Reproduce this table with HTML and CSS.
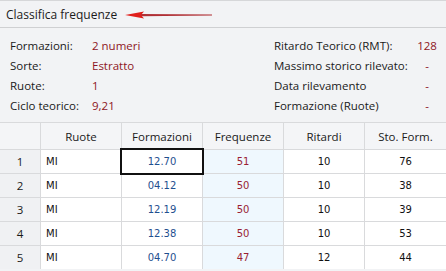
FILE: index.html
```html
<!DOCTYPE html>
<html>
<head>
<meta charset="utf-8">
<link rel="stylesheet" href="styles.css">
</head>
<body>
<div class="titlebar">
  <span class="title">Classifica frequenze</span>
  <svg class="arrow" width="88" height="12" viewBox="0 0 88 12">
    <polygon points="16,5 87,5.6 87,6.4 16,7.2" fill="#b03035"/>
    <polygon points="0,6 19,2.5 16,6 19,9.5" fill="#e0201c"/>
  </svg>
</div>
<div class="info">
  <div class="col left">
    <div class="row"><span class="lbl">Formazioni:</span><span class="val">2 numeri</span></div>
    <div class="row"><span class="lbl">Sorte:</span><span class="val">Estratto</span></div>
    <div class="row"><span class="lbl">Ruote:</span><span class="val">1</span></div>
    <div class="row"><span class="lbl">Ciclo teorico:</span><span class="val">9,21</span></div>
  </div>
  <div class="col right">
    <div class="row"><span class="lbl">Ritardo Teorico (RMT):</span><span class="val">128</span></div>
    <div class="row"><span class="lbl">Massimo storico rilevato:</span><span class="val">-</span></div>
    <div class="row"><span class="lbl">Data rilevamento</span><span class="val">-</span></div>
    <div class="row"><span class="lbl">Formazione (Ruote)</span><span class="val">-</span></div>
  </div>
</div>
<div class="grid">
  <div class="hd corner"></div>
  <div class="hd">Ruote</div>
  <div class="hd">Formazioni</div>
  <div class="hd">Frequenze</div>
  <div class="hd">Ritardi</div>
  <div class="hd">Sto. Form.</div>

  <div class="rh">1</div><div class="c ruota">MI</div><div class="c form focus">12.70</div><div class="c freq">51</div><div class="c num">10</div><div class="c num">76</div>
  <div class="rh">2</div><div class="c ruota">MI</div><div class="c form">04.12</div><div class="c freq">50</div><div class="c num">10</div><div class="c num">38</div>
  <div class="rh">3</div><div class="c ruota">MI</div><div class="c form">12.19</div><div class="c freq">50</div><div class="c num">10</div><div class="c num">39</div>
  <div class="rh">4</div><div class="c ruota">MI</div><div class="c form">12.38</div><div class="c freq">50</div><div class="c num">10</div><div class="c num">53</div>
  <div class="rh">5</div><div class="c ruota">MI</div><div class="c form">04.70</div><div class="c freq">47</div><div class="c num">12</div><div class="c num">44</div>
</div>
</body>
</html>
```
FILE: styles.css
```css
html, body {
  margin: 0;
  padding: 0;
  background: #f2f3f5;
  overflow: hidden;
}
body {
  width: 446px;
  height: 271px;
  font-family: "Open Sans", "Noto Sans", sans-serif;
  color: #1a1a1a;
}
.titlebar {
  height: 26px;
  border-top: 1px solid #d6d7d9;
  border-bottom: 1px solid #cfd0d2;
  background: #f2f3f5;
  display: flex;
  align-items: center;
  padding-left: 6px;
  box-sizing: content-box;
}
.title {
  font-size: 12px;
  color: #1b1b1b;
}
.arrow {
  margin-left: 8px;
  margin-top: 1px;
}
.info {
  display: flex;
  padding: 7px 0 0 10px;
  height: 87px;
}
.col {
  display: flex;
  flex-direction: column;
}
.left { width: 264px; }
.row {
  height: 20px;
  display: flex;
  align-items: center;
  font-size: 11.5px;
}
.lbl { color: #1a1a1a; }
.left .lbl { width: 82px; }
.right .lbl { width: 141px; }
.val { color: #8e1624; }
.right .val { width: 24px; text-align: center; }
.grid {
  display: grid;
  grid-template-columns: 40px 80px 80px 80px 80px 81px;
  grid-template-rows: 26px repeat(5, 23px);
  gap: 1px;
  background: #d9dadc;
  border-top: 1px solid #d9dadc;
  font-family: "DejaVu Sans", sans-serif;
  font-size: 10px;
}
.hd {
  background: #f4f5f7;
  display: flex;
  align-items: center;
  justify-content: center;
  font-family: "Open Sans", "Noto Sans", sans-serif;
  font-size: 11.5px;
  color: #1a1a1a;
}
.rh {
  background: #f0f1f3;
  display: flex;
  align-items: center;
  justify-content: center;
  font-family: "Open Sans", "Noto Sans", sans-serif;
  font-size: 11.5px;
  color: #1a1a1a;
}
.c {
  background: #ffffff;
  display: flex;
  align-items: center;
  justify-content: center;
  color: #111;
}
.ruota {
  justify-content: flex-start;
  padding-left: 5px;
}
.form { color: #1f4f8f; }
.freq { background: #eff8fe; color: #9a1f33; }
.focus {
  position: relative;
  z-index: 1;
  outline: 2px solid #111;
  outline-offset: 0px;
}
```
